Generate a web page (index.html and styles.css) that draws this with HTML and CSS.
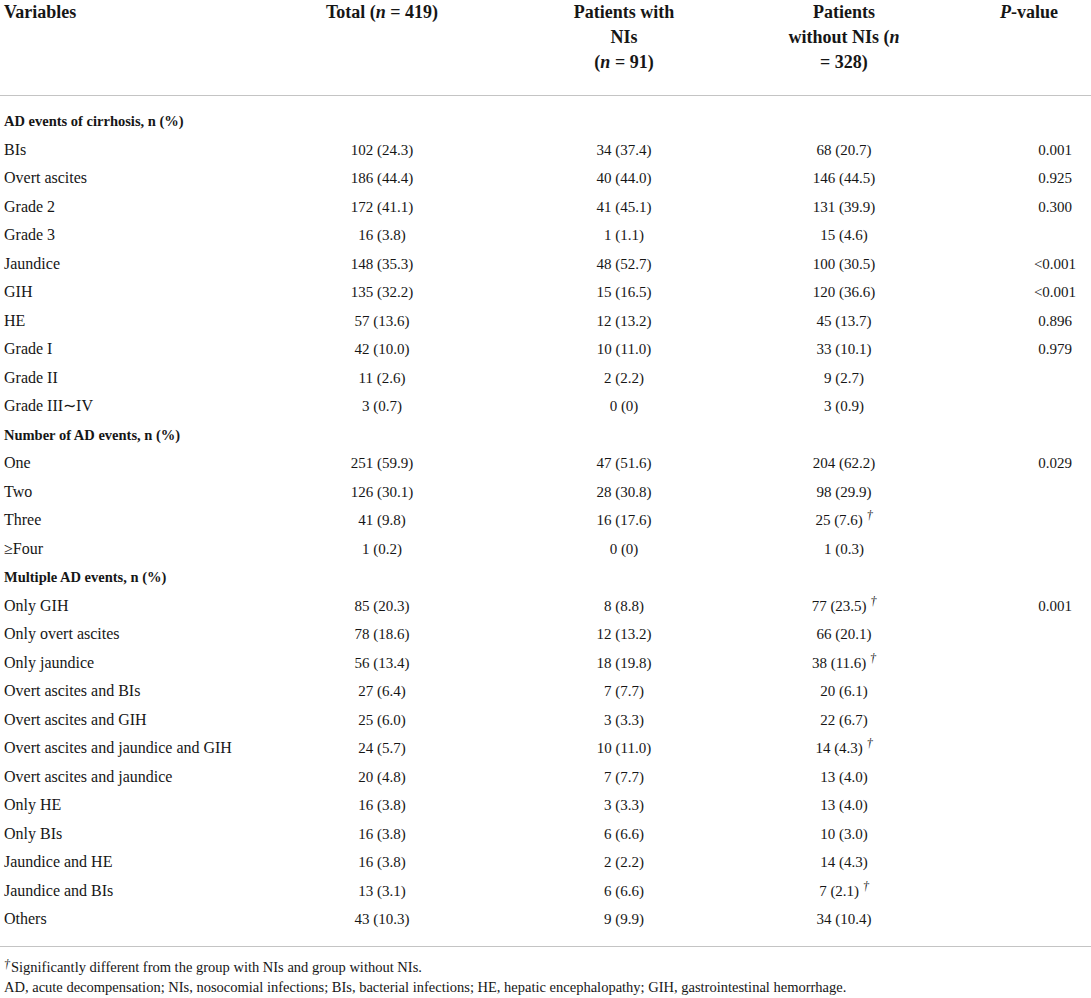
FILE: index.html
```html
<!DOCTYPE html>
<html lang="en">
<head>
<meta charset="utf-8">
<title>AD events table</title>
<link rel="stylesheet" href="styles.css">
</head>
<body>
<div class="wrap">
<table class="data">
  <colgroup>
    <col class="c-var">
    <col class="c-total">
    <col class="c-with">
    <col class="c-without">
    <col class="c-p">
  </colgroup>
  <thead>
    <tr>
      <th class="h-var">Variables</th>
      <th>Total (<i>n</i> = 419)</th>
      <th>Patients with<br>NIs<br>(<i>n</i> = 91)</th>
      <th>Patients<br>without NIs (<i>n</i><br>= 328)</th>
      <th class="h-p"><i>P</i>-value</th>
    </tr>
  </thead>
  <tbody>
    <tr class="sec first"><td colspan="5">AD events of cirrhosis, n (%)</td></tr>
    <tr><td>BIs</td><td>102 (24.3)</td><td>34 (37.4)</td><td>68 (20.7)</td><td class="p">0.001</td></tr>
    <tr><td>Overt ascites</td><td>186 (44.4)</td><td>40 (44.0)</td><td>146 (44.5)</td><td class="p">0.925</td></tr>
    <tr><td>Grade 2</td><td>172 (41.1)</td><td>41 (45.1)</td><td>131 (39.9)</td><td class="p">0.300</td></tr>
    <tr><td>Grade 3</td><td>16 (3.8)</td><td>1 (1.1)</td><td>15 (4.6)</td><td class="p"></td></tr>
    <tr><td>Jaundice</td><td>148 (35.3)</td><td>48 (52.7)</td><td>100 (30.5)</td><td class="p">&lt;0.001</td></tr>
    <tr><td>GIH</td><td>135 (32.2)</td><td>15 (16.5)</td><td>120 (36.6)</td><td class="p">&lt;0.001</td></tr>
    <tr><td>HE</td><td>57 (13.6)</td><td>12 (13.2)</td><td>45 (13.7)</td><td class="p">0.896</td></tr>
    <tr><td>Grade I</td><td>42 (10.0)</td><td>10 (11.0)</td><td>33 (10.1)</td><td class="p">0.979</td></tr>
    <tr><td>Grade II</td><td>11 (2.6)</td><td>2 (2.2)</td><td>9 (2.7)</td><td class="p"></td></tr>
    <tr><td>Grade III∼IV</td><td>3 (0.7)</td><td>0 (0)</td><td>3 (0.9)</td><td class="p"></td></tr>
    <tr class="sec"><td colspan="5">Number of AD events, n (%)</td></tr>
    <tr><td>One</td><td>251 (59.9)</td><td>47 (51.6)</td><td>204 (62.2)</td><td class="p">0.029</td></tr>
    <tr><td>Two</td><td>126 (30.1)</td><td>28 (30.8)</td><td>98 (29.9)</td><td class="p"></td></tr>
    <tr><td>Three</td><td>41 (9.8)</td><td>16 (17.6)</td><td>25 (7.6) <sup class="dag">†</sup></td><td class="p"></td></tr>
    <tr><td>≥Four</td><td>1 (0.2)</td><td>0 (0)</td><td>1 (0.3)</td><td class="p"></td></tr>
    <tr class="sec"><td colspan="5">Multiple AD events, n (%)</td></tr>
    <tr><td>Only GIH</td><td>85 (20.3)</td><td>8 (8.8)</td><td>77 (23.5) <sup class="dag">†</sup></td><td class="p">0.001</td></tr>
    <tr><td>Only overt ascites</td><td>78 (18.6)</td><td>12 (13.2)</td><td>66 (20.1)</td><td class="p"></td></tr>
    <tr><td>Only jaundice</td><td>56 (13.4)</td><td>18 (19.8)</td><td>38 (11.6) <sup class="dag">†</sup></td><td class="p"></td></tr>
    <tr><td>Overt ascites and BIs</td><td>27 (6.4)</td><td>7 (7.7)</td><td>20 (6.1)</td><td class="p"></td></tr>
    <tr><td>Overt ascites and GIH</td><td>25 (6.0)</td><td>3 (3.3)</td><td>22 (6.7)</td><td class="p"></td></tr>
    <tr><td>Overt ascites and jaundice and GIH</td><td>24 (5.7)</td><td>10 (11.0)</td><td>14 (4.3) <sup class="dag">†</sup></td><td class="p"></td></tr>
    <tr><td>Overt ascites and jaundice</td><td>20 (4.8)</td><td>7 (7.7)</td><td>13 (4.0)</td><td class="p"></td></tr>
    <tr><td>Only HE</td><td>16 (3.8)</td><td>3 (3.3)</td><td>13 (4.0)</td><td class="p"></td></tr>
    <tr><td>Only BIs</td><td>16 (3.8)</td><td>6 (6.6)</td><td>10 (3.0)</td><td class="p"></td></tr>
    <tr><td>Jaundice and HE</td><td>16 (3.8)</td><td>2 (2.2)</td><td>14 (4.3)</td><td class="p"></td></tr>
    <tr><td>Jaundice and BIs</td><td>13 (3.1)</td><td>6 (6.6)</td><td>7 (2.1) <sup class="dag">†</sup></td><td class="p"></td></tr>
    <tr class="last"><td>Others</td><td>43 (10.3)</td><td>9 (9.9)</td><td>34 (10.4)</td><td class="p"></td></tr>
  </tbody>
</table>
<div class="notes">
  <p><sup class="dag">†</sup>Significantly different from the group with NIs and group without NIs.</p>
  <p>AD, acute decompensation; NIs, nosocomial infections; BIs, bacterial infections; HE, hepatic encephalopathy; GIH, gastrointestinal hemorrhage.</p>
</div>
</div>
</body>
</html>
```

FILE: styles.css
```css
html, body {
  margin: 0;
  padding: 0;
  background: #ffffff;
}
body {
  font-family: "Liberation Serif", "Times New Roman", serif;
  color: #161616;
  overflow-x: hidden;
}
.wrap {
  width: 1091px;
}
.data {
  width: 1091px;
  border-collapse: collapse;
  table-layout: fixed;
}
.c-var { width: 290px; }
.c-total { width: 184px; }
.c-with { width: 300px; }
.c-without { width: 140px; }
.c-p { width: 177px; }

.data th {
  font-size: 18px;
  font-weight: bold;
  line-height: 25px;
  padding: 0 0 20px 0;
  text-align: center;
  vertical-align: top;
  border-bottom: 1px solid #c4c4c4;
  white-space: nowrap;
}
.data th.h-var {
  text-align: left;
  padding-left: 4px;
}
.data th.h-p {
  text-align: left;
  padding-left: 86px;
}
.data td {
  font-size: 15px;
  line-height: 20.5px;
  padding: 4px 0;
  text-align: center;
  white-space: nowrap;
}
.data td:first-child {
  text-align: left;
  padding-left: 4px;
  font-size: 16px;
}
.data td.p {
  padding-left: 105px;
}
.data tr.sec td {
  font-weight: bold;
  text-align: left;
  font-size: 14.5px;
}
.data tr.first td {
  padding-top: 15px;
}
.data tr.last td {
  padding-bottom: 16px;
  border-bottom: 1px solid #c4c4c4;
}
.dag {
  font-style: italic;
  font-size: 12px;
  line-height: 0;
  vertical-align: 6px;
}
.notes {
  padding: 10px 0 0 4px;
}
.notes p {
  margin: 0;
  font-size: 14.5px;
  line-height: 20px;
}
.notes .dag {
  font-size: 12px;
  vertical-align: 4px;
  margin-right: 1px;
}
```
